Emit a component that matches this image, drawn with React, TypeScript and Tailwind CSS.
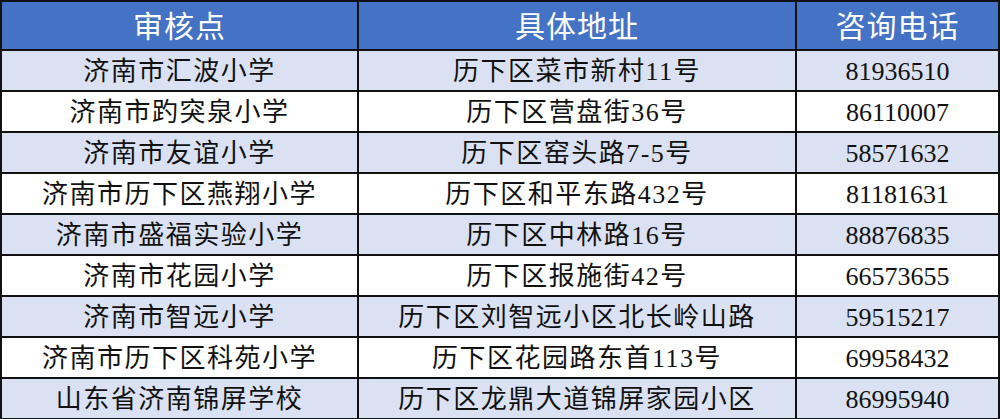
const rows = [
  { name: "济南市汇波小学", addr: "历下区菜市新村11号", tel: "81936510" },
  { name: "济南市趵突泉小学", addr: "历下区营盘街36号", tel: "86110007" },
  { name: "济南市友谊小学", addr: "历下区窑头路7-5号", tel: "58571632" },
  { name: "济南市历下区燕翔小学", addr: "历下区和平东路432号", tel: "81181631" },
  { name: "济南市盛福实验小学", addr: "历下区中林路16号", tel: "88876835" },
  { name: "济南市花园小学", addr: "历下区报施街42号", tel: "66573655" },
  { name: "济南市智远小学", addr: "历下区刘智远小区北长岭山路", tel: "59515217" },
  { name: "济南市历下区科苑小学", addr: "历下区花园路东首113号", tel: "69958432" },
  { name: "山东省济南锦屏学校", addr: "历下区龙鼎大道锦屏家园小区", tel: "86995940" },
];

export default function App() {
  return (
    <div
      className="w-[1000px] h-[419px] overflow-hidden bg-white"
      style={{ fontFamily: '"Liberation Serif", "Noto Sans CJK SC", serif' }}
    >
      <table className="w-[1000px] table-fixed border-collapse border-2 border-[#111]">
        <colgroup>
          <col className="w-[357px]" />
          <col className="w-[438px]" />
          <col />
        </colgroup>
        <thead>
          <tr className="h-[49px] bg-[#4472c4] text-white text-[30px] leading-none">
            <th className="border-2 border-[#111] font-normal tracking-[1px] pt-0.5">审核点</th>
            <th className="border-2 border-[#111] font-normal tracking-[1px] pt-0.5">具体地址</th>
            <th className="border-2 border-[#111] font-normal tracking-[1px] pt-0.5">咨询电话</th>
          </tr>
        </thead>
        <tbody>
          {rows.map((r, i) => (
            <tr
              key={r.tel}
              className={
                "h-[41px] text-[26px] leading-none text-[#111] " +
                (i % 2 === 0 ? "bg-[#d9e1f2]" : "bg-white")
              }
            >
              <td className="border-2 border-[#111] text-center tracking-[1.5px] pt-0.5">{r.name}</td>
              <td className="border-2 border-[#111] text-center tracking-[1.5px] pt-0.5">{r.addr}</td>
              <td className="border-2 border-[#111] text-center pt-0.5">{r.tel}</td>
            </tr>
          ))}
        </tbody>
      </table>
    </div>
  );
}
